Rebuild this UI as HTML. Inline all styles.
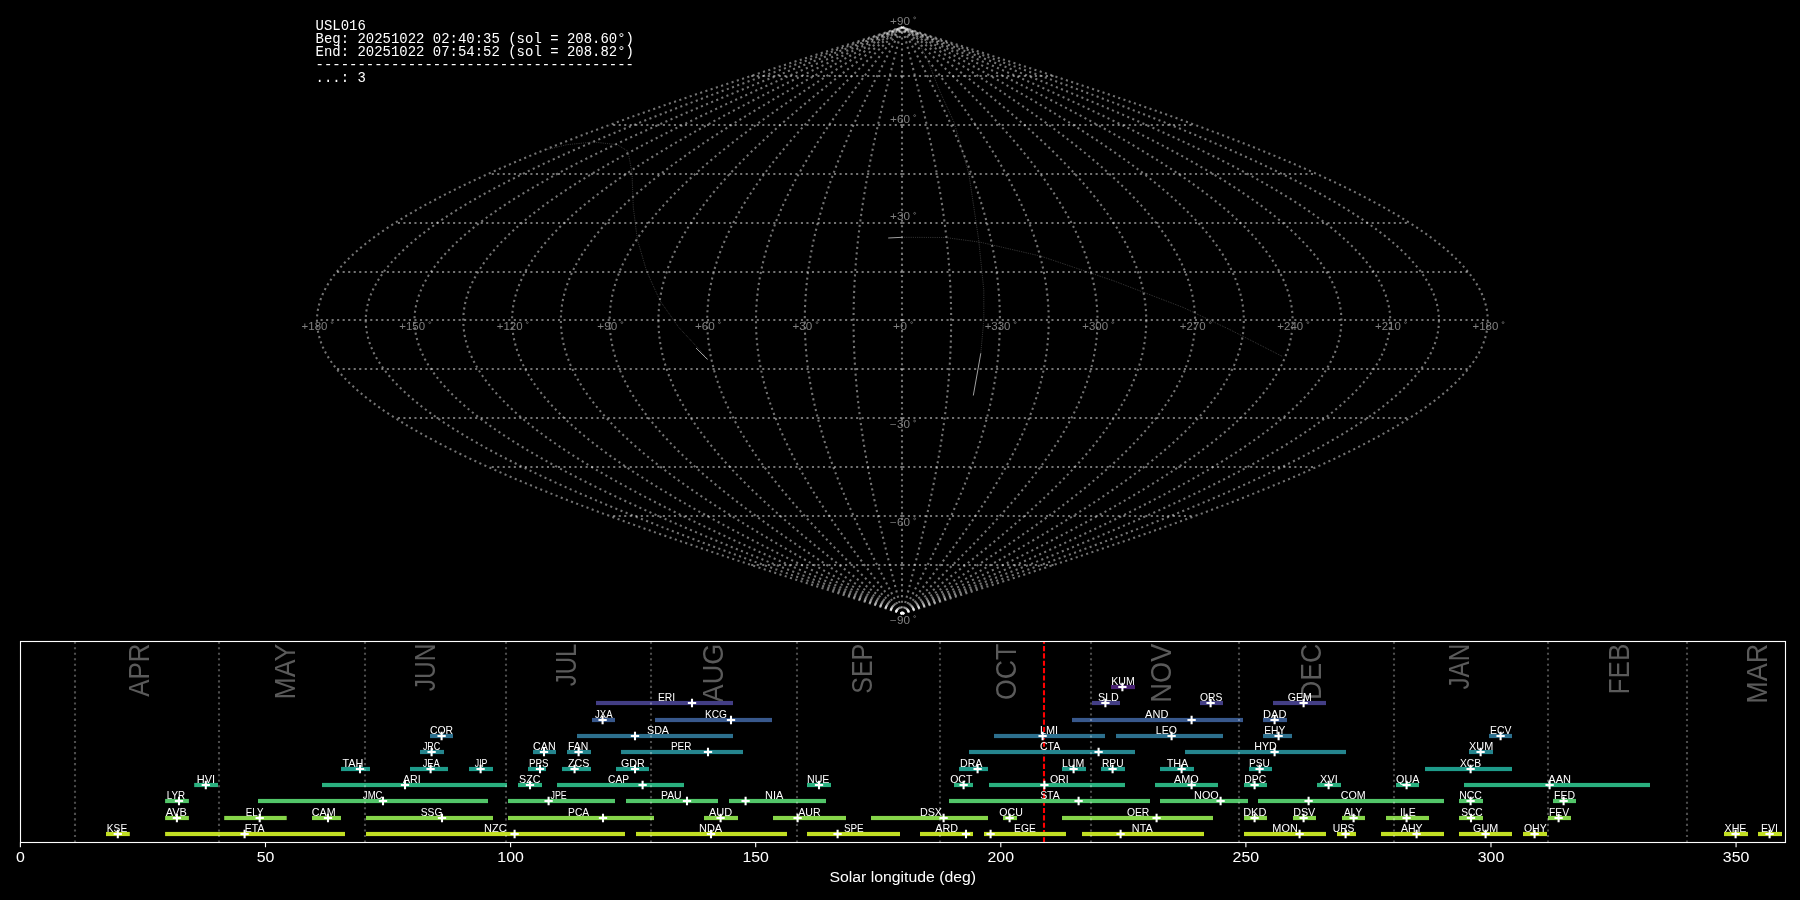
<!DOCTYPE html><html><head><meta charset="utf-8"><title>plot</title><style>html,body{margin:0;padding:0;background:#000;width:1800px;height:900px;overflow:hidden}svg{display:block;will-change:transform}</style></head><body>
<svg width="1800" height="900" viewBox="0 0 1800 900">
<g fill="none" stroke="#fff" stroke-opacity="0.45" stroke-width="2.0833" stroke-dasharray="2.083 3.438"><path d="M902.35 613.76 883.77 607.83 865.22 601.91 846.7 595.98 828.24 590.06 809.85 584.13 791.55 578.21 773.37 572.28 755.32 566.36 737.41 560.43 719.67 554.51 702.11 548.58 684.76 542.65 667.63 536.73 650.73 530.8 634.08 524.88 617.71 518.95 601.62 513.03 585.83 507.1 570.36 501.18 555.23 495.25 540.45 489.33 526.03 483.4 511.99 477.47 498.34 471.55 485.1 465.62 472.28 459.7 459.9 453.77 447.96 447.85 436.47 441.92 425.46 436 414.92 430.07 404.88 424.15 395.34 418.22 386.3 412.29 377.79 406.37 369.81 400.44 362.36 394.52 355.45 388.59 349.1 382.67 343.3 376.74 338.07 370.82 333.4 364.89 329.31 358.97 325.79 353.04 322.86 347.11 320.51 341.19 318.74 335.26 317.56 329.34 316.97 323.41 316.97 317.49 317.56 311.56 318.74 305.64 320.51 299.71 322.86 293.79 325.79 287.86 329.31 281.93 333.4 276.01 338.07 270.08 343.3 264.16 349.1 258.23 355.45 252.31 362.36 246.38 369.81 240.46 377.79 234.53 386.3 228.61 395.34 222.68 404.88 216.75 414.92 210.83 425.46 204.9 436.47 198.98 447.96 193.05 459.9 187.13 472.28 181.2 485.1 175.28 498.34 169.35 511.99 163.43 526.03 157.5 540.45 151.57 555.23 145.65 570.36 139.72 585.83 133.8 601.62 127.87 617.71 121.95 634.08 116.02 650.73 110.1 667.63 104.17 684.76 98.25 702.11 92.32 719.67 86.39 737.41 80.47 755.32 74.54 773.37 68.62 791.55 62.69 809.85 56.77 828.24 50.84 846.7 44.92 865.22 38.99 883.77 33.07 902.35 27.14"/><path d="M902.35 613.76 885.32 607.83 868.31 601.91 851.34 595.98 834.41 590.06 817.56 584.13 800.79 578.21 784.12 572.28 767.57 566.36 751.15 560.43 734.89 554.51 718.8 548.58 702.89 542.65 687.19 536.73 671.7 530.8 656.44 524.88 641.43 518.95 626.68 513.03 612.21 507.1 598.03 501.18 584.16 495.25 570.61 489.33 557.39 483.4 544.52 477.47 532.01 471.55 519.87 465.62 508.12 459.7 496.77 453.77 485.82 447.85 475.29 441.92 465.2 436 455.54 430.07 446.33 424.15 437.59 418.22 429.31 412.29 421.5 406.37 414.18 400.44 407.36 394.52 401.03 388.59 395.2 382.67 389.89 376.74 385.09 370.82 380.82 364.89 377.06 358.97 373.84 353.04 371.15 347.11 368.99 341.19 367.38 335.26 366.3 329.34 365.76 323.41 365.76 317.49 366.3 311.56 367.38 305.64 368.99 299.71 371.15 293.79 373.84 287.86 377.06 281.93 380.82 276.01 385.09 270.08 389.89 264.16 395.2 258.23 401.03 252.31 407.36 246.38 414.18 240.46 421.5 234.53 429.31 228.61 437.59 222.68 446.33 216.75 455.54 210.83 465.2 204.9 475.29 198.98 485.82 193.05 496.77 187.13 508.12 181.2 519.87 175.28 532.01 169.35 544.52 163.43 557.39 157.5 570.61 151.57 584.16 145.65 598.03 139.72 612.21 133.8 626.68 127.87 641.43 121.95 656.44 116.02 671.7 110.1 687.19 104.17 702.89 98.25 718.8 92.32 734.89 86.39 751.15 80.47 767.57 74.54 784.12 68.62 800.79 62.69 817.56 56.77 834.41 50.84 851.34 44.92 868.31 38.99 885.32 33.07 902.35 27.14"/><path d="M902.35 613.76 886.87 607.83 871.41 601.91 855.97 595.98 840.59 590.06 825.27 584.13 810.02 578.21 794.87 572.28 779.82 566.36 764.9 560.43 750.12 554.51 735.49 548.58 721.03 542.65 706.75 536.73 692.66 530.8 678.79 524.88 665.15 518.95 651.74 513.03 638.58 507.1 625.7 501.18 613.09 495.25 600.77 489.33 588.75 483.4 577.05 477.47 565.68 471.55 554.64 465.62 543.96 459.7 533.64 453.77 523.69 447.85 514.12 441.92 504.94 436 496.16 430.07 487.79 424.15 479.84 418.22 472.31 412.29 465.22 406.37 458.56 400.44 452.36 394.52 446.6 388.59 441.31 382.67 436.48 376.74 432.12 370.82 428.23 364.89 424.82 358.97 421.89 353.04 419.44 347.11 417.48 341.19 416.01 335.26 415.03 329.34 414.54 323.41 414.54 317.49 415.03 311.56 416.01 305.64 417.48 299.71 419.44 293.79 421.89 287.86 424.82 281.93 428.23 276.01 432.12 270.08 436.48 264.16 441.31 258.23 446.6 252.31 452.36 246.38 458.56 240.46 465.22 234.53 472.31 228.61 479.84 222.68 487.79 216.75 496.16 210.83 504.94 204.9 514.12 198.98 523.69 193.05 533.64 187.13 543.96 181.2 554.64 175.28 565.68 169.35 577.05 163.43 588.75 157.5 600.77 151.57 613.09 145.65 625.7 139.72 638.58 133.8 651.74 127.87 665.15 121.95 678.79 116.02 692.66 110.1 706.75 104.17 721.03 98.25 735.49 92.32 750.12 86.39 764.9 80.47 779.82 74.54 794.87 68.62 810.02 62.69 825.27 56.77 840.59 50.84 855.97 44.92 871.41 38.99 886.87 33.07 902.35 27.14"/><path d="M902.35 613.76 888.42 607.83 874.5 601.91 860.61 595.98 846.76 590.06 832.97 584.13 819.25 578.21 805.61 572.28 792.07 566.36 778.64 560.43 765.34 554.51 752.17 548.58 739.16 542.65 726.31 536.73 713.63 530.8 701.15 524.88 688.87 518.95 676.8 513.03 664.96 507.1 653.36 501.18 642.01 495.25 630.92 489.33 620.11 483.4 609.58 477.47 599.34 471.55 589.41 465.62 579.8 459.7 570.51 453.77 561.55 447.85 552.94 441.92 544.68 436 536.78 430.07 529.25 424.15 522.09 418.22 515.31 412.29 508.93 406.37 502.94 400.44 497.36 394.52 492.18 388.59 487.41 382.67 483.06 376.74 479.14 370.82 475.64 364.89 472.57 358.97 469.93 353.04 467.73 347.11 465.97 341.19 464.64 335.26 463.76 329.34 463.32 323.41 463.32 317.49 463.76 311.56 464.64 305.64 465.97 299.71 467.73 293.79 469.93 287.86 472.57 281.93 475.64 276.01 479.14 270.08 483.06 264.16 487.41 258.23 492.18 252.31 497.36 246.38 502.94 240.46 508.93 234.53 515.31 228.61 522.09 222.68 529.25 216.75 536.78 210.83 544.68 204.9 552.94 198.98 561.55 193.05 570.51 187.13 579.8 181.2 589.41 175.28 599.34 169.35 609.58 163.43 620.11 157.5 630.92 151.57 642.01 145.65 653.36 139.72 664.96 133.8 676.8 127.87 688.87 121.95 701.15 116.02 713.63 110.1 726.31 104.17 739.16 98.25 752.17 92.32 765.34 86.39 778.64 80.47 792.07 74.54 805.61 68.62 819.25 62.69 832.97 56.77 846.76 50.84 860.61 44.92 874.5 38.99 888.42 33.07 902.35 27.14"/><path d="M902.35 613.76 889.97 607.83 877.6 601.91 865.25 595.98 852.94 590.06 840.68 584.13 828.49 578.21 816.36 572.28 804.33 566.36 792.39 560.43 780.56 554.51 768.86 548.58 757.29 542.65 745.87 536.73 734.6 530.8 723.5 524.88 712.59 518.95 701.86 513.03 691.34 507.1 681.03 501.18 670.94 495.25 661.08 489.33 651.47 483.4 642.11 477.47 633.01 471.55 624.19 465.62 615.64 459.7 607.38 453.77 599.42 447.85 591.76 441.92 584.42 436 577.4 430.07 570.7 424.15 564.34 418.22 558.32 412.29 552.64 406.37 547.32 400.44 542.36 394.52 537.75 388.59 533.52 382.67 529.65 376.74 526.16 370.82 523.05 364.89 520.32 358.97 517.98 353.04 516.02 347.11 514.45 341.19 513.28 335.26 512.49 329.34 512.1 323.41 512.1 317.49 512.49 311.56 513.28 305.64 514.45 299.71 516.02 293.79 517.98 287.86 520.32 281.93 523.05 276.01 526.16 270.08 529.65 264.16 533.52 258.23 537.75 252.31 542.36 246.38 547.32 240.46 552.64 234.53 558.32 228.61 564.34 222.68 570.7 216.75 577.4 210.83 584.42 204.9 591.76 198.98 599.42 193.05 607.38 187.13 615.64 181.2 624.19 175.28 633.01 169.35 642.11 163.43 651.47 157.5 661.08 151.57 670.94 145.65 681.03 139.72 691.34 133.8 701.86 127.87 712.59 121.95 723.5 116.02 734.6 110.1 745.87 104.17 757.29 98.25 768.86 92.32 780.56 86.39 792.39 80.47 804.33 74.54 816.36 68.62 828.49 62.69 840.68 56.77 852.94 50.84 865.25 44.92 877.6 38.99 889.97 33.07 902.35 27.14"/><path d="M902.35 613.76 891.51 607.83 880.69 601.91 869.89 595.98 859.12 590.06 848.39 584.13 837.72 578.21 827.11 572.28 816.58 566.36 806.13 560.43 795.79 554.51 785.55 548.58 775.42 542.65 765.43 536.73 755.57 530.8 745.86 524.88 736.31 518.95 726.92 513.03 717.71 507.1 708.69 501.18 699.86 495.25 691.24 489.33 682.83 483.4 674.64 477.47 666.68 471.55 658.96 465.62 651.48 459.7 644.25 453.77 637.29 447.85 630.59 441.92 624.16 436 618.02 430.07 612.16 424.15 606.59 418.22 601.32 412.29 596.36 406.37 591.7 400.44 587.35 394.52 583.33 388.59 579.62 382.67 576.24 376.74 573.19 370.82 570.46 364.89 568.08 358.97 566.03 353.04 564.31 347.11 562.94 341.19 561.91 335.26 561.22 329.34 560.88 323.41 560.88 317.49 561.22 311.56 561.91 305.64 562.94 299.71 564.31 293.79 566.03 287.86 568.08 281.93 570.46 276.01 573.19 270.08 576.24 264.16 579.62 258.23 583.33 252.31 587.35 246.38 591.7 240.46 596.36 234.53 601.32 228.61 606.59 222.68 612.16 216.75 618.02 210.83 624.16 204.9 630.59 198.98 637.29 193.05 644.25 187.13 651.48 181.2 658.96 175.28 666.68 169.35 674.64 163.43 682.83 157.5 691.24 151.57 699.86 145.65 708.69 139.72 717.71 133.8 726.92 127.87 736.31 121.95 745.86 116.02 755.57 110.1 765.43 104.17 775.42 98.25 785.55 92.32 795.79 86.39 806.13 80.47 816.58 74.54 827.11 68.62 837.72 62.69 848.39 56.77 859.12 50.84 869.89 44.92 880.69 38.99 891.51 33.07 902.35 27.14"/><path d="M902.35 613.76 893.06 607.83 883.78 601.91 874.52 595.98 865.29 590.06 856.1 584.13 846.95 578.21 837.86 572.28 828.83 566.36 819.88 560.43 811.01 554.51 802.23 548.58 793.56 542.65 784.99 536.73 776.54 530.8 768.22 524.88 760.03 518.95 751.98 513.03 744.09 507.1 736.36 501.18 728.79 495.25 721.4 489.33 714.19 483.4 707.17 477.47 700.35 471.55 693.73 465.62 687.32 459.7 681.12 453.77 675.15 447.85 669.41 441.92 663.9 436 658.64 430.07 653.61 424.15 648.84 418.22 644.33 412.29 640.07 406.37 636.08 400.44 632.35 394.52 628.9 388.59 625.72 382.67 622.83 376.74 620.21 370.82 617.88 364.89 615.83 358.97 614.07 353.04 612.6 347.11 611.43 341.19 610.55 335.26 609.96 329.34 609.66 323.41 609.66 317.49 609.96 311.56 610.55 305.64 611.43 299.71 612.6 293.79 614.07 287.86 615.83 281.93 617.88 276.01 620.21 270.08 622.83 264.16 625.72 258.23 628.9 252.31 632.35 246.38 636.08 240.46 640.07 234.53 644.33 228.61 648.84 222.68 653.61 216.75 658.64 210.83 663.9 204.9 669.41 198.98 675.15 193.05 681.12 187.13 687.32 181.2 693.73 175.28 700.35 169.35 707.17 163.43 714.19 157.5 721.4 151.57 728.79 145.65 736.36 139.72 744.09 133.8 751.98 127.87 760.03 121.95 768.22 116.02 776.54 110.1 784.99 104.17 793.56 98.25 802.23 92.32 811.01 86.39 819.88 80.47 828.83 74.54 837.86 68.62 846.95 62.69 856.1 56.77 865.29 50.84 874.52 44.92 883.78 38.99 893.06 33.07 902.35 27.14"/><path d="M902.35 613.76 894.61 607.83 886.88 601.91 879.16 595.98 871.47 590.06 863.81 584.13 856.18 578.21 848.61 572.28 841.09 566.36 833.62 560.43 826.23 554.51 818.92 548.58 811.69 542.65 804.55 536.73 797.51 530.8 790.57 524.88 783.75 518.95 777.04 513.03 770.47 507.1 764.02 501.18 757.72 495.25 751.56 489.33 745.55 483.4 739.7 477.47 734.01 471.55 728.5 465.62 723.16 459.7 717.99 453.77 713.02 447.85 708.23 441.92 703.64 436 699.25 430.07 695.07 424.15 691.09 418.22 687.33 412.29 683.78 406.37 680.46 400.44 677.35 394.52 674.48 388.59 671.83 382.67 669.41 376.74 667.23 370.82 665.29 364.89 663.58 358.97 662.12 353.04 660.9 347.11 659.92 341.19 659.18 335.26 658.69 329.34 658.44 323.41 658.44 317.49 658.69 311.56 659.18 305.64 659.92 299.71 660.9 293.79 662.12 287.86 663.58 281.93 665.29 276.01 667.23 270.08 669.41 264.16 671.83 258.23 674.48 252.31 677.35 246.38 680.46 240.46 683.78 234.53 687.33 228.61 691.09 222.68 695.07 216.75 699.25 210.83 703.64 204.9 708.23 198.98 713.02 193.05 717.99 187.13 723.16 181.2 728.5 175.28 734.01 169.35 739.7 163.43 745.55 157.5 751.56 151.57 757.72 145.65 764.02 139.72 770.47 133.8 777.04 127.87 783.75 121.95 790.57 116.02 797.51 110.1 804.55 104.17 811.69 98.25 818.92 92.32 826.23 86.39 833.62 80.47 841.09 74.54 848.61 68.62 856.18 62.69 863.81 56.77 871.47 50.84 879.16 44.92 886.88 38.99 894.61 33.07 902.35 27.14"/><path d="M902.35 613.76 896.16 607.83 889.97 601.91 883.8 595.98 877.65 590.06 871.52 584.13 865.42 578.21 859.36 572.28 853.34 566.36 847.37 560.43 841.46 554.51 835.6 548.58 829.82 542.65 824.11 536.73 818.48 530.8 812.93 524.88 807.47 518.95 802.11 513.03 796.84 507.1 791.69 501.18 786.64 495.25 781.72 489.33 776.91 483.4 772.23 477.47 767.68 471.55 763.27 465.62 758.99 459.7 754.87 453.77 750.89 447.85 747.06 441.92 743.39 436 739.87 430.07 736.53 424.15 733.35 418.22 730.33 412.29 727.5 406.37 724.84 400.44 722.35 394.52 720.05 388.59 717.93 382.67 716 376.74 714.26 370.82 712.7 364.89 711.34 358.97 710.16 353.04 709.19 347.11 708.4 341.19 707.81 335.26 707.42 329.34 707.22 323.41 707.22 317.49 707.42 311.56 707.81 305.64 708.4 299.71 709.19 293.79 710.16 287.86 711.34 281.93 712.7 276.01 714.26 270.08 716 264.16 717.93 258.23 720.05 252.31 722.35 246.38 724.84 240.46 727.5 234.53 730.33 228.61 733.35 222.68 736.53 216.75 739.87 210.83 743.39 204.9 747.06 198.98 750.89 193.05 754.87 187.13 758.99 181.2 763.27 175.28 767.68 169.35 772.23 163.43 776.91 157.5 781.72 151.57 786.64 145.65 791.69 139.72 796.84 133.8 802.11 127.87 807.47 121.95 812.93 116.02 818.48 110.1 824.11 104.17 829.82 98.25 835.6 92.32 841.46 86.39 847.37 80.47 853.34 74.54 859.36 68.62 865.42 62.69 871.52 56.77 877.65 50.84 883.8 44.92 889.97 38.99 896.16 33.07 902.35 27.14"/><path d="M902.35 613.76 897.71 607.83 893.07 601.91 888.44 595.98 883.82 590.06 879.22 584.13 874.65 578.21 870.1 572.28 865.59 566.36 861.11 560.43 856.68 554.51 852.29 548.58 847.95 542.65 843.67 536.73 839.44 530.8 835.28 524.88 831.19 518.95 827.17 513.03 823.22 507.1 819.35 501.18 815.57 495.25 811.87 489.33 808.27 483.4 804.76 477.47 801.35 471.55 798.04 465.62 794.83 459.7 791.74 453.77 788.75 447.85 785.88 441.92 783.13 436 780.49 430.07 777.98 424.15 775.6 418.22 773.34 412.29 771.21 406.37 769.21 400.44 767.35 394.52 765.63 388.59 764.04 382.67 762.59 376.74 761.28 370.82 760.11 364.89 759.09 358.97 758.21 353.04 757.48 347.11 756.89 341.19 756.45 335.26 756.15 329.34 756.01 323.41 756.01 317.49 756.15 311.56 756.45 305.64 756.89 299.71 757.48 293.79 758.21 287.86 759.09 281.93 760.11 276.01 761.28 270.08 762.59 264.16 764.04 258.23 765.63 252.31 767.35 246.38 769.21 240.46 771.21 234.53 773.34 228.61 775.6 222.68 777.98 216.75 780.49 210.83 783.13 204.9 785.88 198.98 788.75 193.05 791.74 187.13 794.83 181.2 798.04 175.28 801.35 169.35 804.76 163.43 808.27 157.5 811.87 151.57 815.57 145.65 819.35 139.72 823.22 133.8 827.17 127.87 831.19 121.95 835.28 116.02 839.44 110.1 843.67 104.17 847.95 98.25 852.29 92.32 856.68 86.39 861.11 80.47 865.59 74.54 870.1 68.62 874.65 62.69 879.22 56.77 883.82 50.84 888.44 44.92 893.07 38.99 897.71 33.07 902.35 27.14"/><path d="M902.35 613.76 899.25 607.83 896.16 601.91 893.07 595.98 890 590.06 886.93 584.13 883.88 578.21 880.85 572.28 877.84 566.36 874.86 560.43 871.9 554.51 868.98 548.58 866.09 542.65 863.23 536.73 860.41 530.8 857.64 524.88 854.91 518.95 852.23 513.03 849.6 507.1 847.02 501.18 844.5 495.25 842.03 489.33 839.63 483.4 837.29 477.47 835.02 471.55 832.81 465.62 830.67 459.7 828.61 453.77 826.62 447.85 824.7 441.92 822.87 436 821.11 430.07 819.44 424.15 817.85 418.22 816.34 412.29 814.92 406.37 813.59 400.44 812.35 394.52 811.2 388.59 810.14 382.67 809.18 376.74 808.3 370.82 807.53 364.89 806.84 358.97 806.26 353.04 805.77 347.11 805.38 341.19 805.08 335.26 804.89 329.34 804.79 323.41 804.79 317.49 804.89 311.56 805.08 305.64 805.38 299.71 805.77 293.79 806.26 287.86 806.84 281.93 807.53 276.01 808.3 270.08 809.18 264.16 810.14 258.23 811.2 252.31 812.35 246.38 813.59 240.46 814.92 234.53 816.34 228.61 817.85 222.68 819.44 216.75 821.11 210.83 822.87 204.9 824.7 198.98 826.62 193.05 828.61 187.13 830.67 181.2 832.81 175.28 835.02 169.35 837.29 163.43 839.63 157.5 842.03 151.57 844.5 145.65 847.02 139.72 849.6 133.8 852.23 127.87 854.91 121.95 857.64 116.02 860.41 110.1 863.23 104.17 866.09 98.25 868.98 92.32 871.9 86.39 874.86 80.47 877.84 74.54 880.85 68.62 883.88 62.69 886.93 56.77 890 50.84 893.07 44.92 896.16 38.99 899.25 33.07 902.35 27.14"/><path d="M902.35 613.76 900.8 607.83 899.26 601.91 897.71 595.98 896.17 590.06 894.64 584.13 893.12 578.21 891.6 572.28 890.1 566.36 888.6 560.43 887.13 554.51 885.66 548.58 884.22 542.65 882.79 536.73 881.38 530.8 879.99 524.88 878.63 518.95 877.29 513.03 875.97 507.1 874.68 501.18 873.42 495.25 872.19 489.33 870.99 483.4 869.82 477.47 868.68 471.55 867.58 465.62 866.51 459.7 865.48 453.77 864.48 447.85 863.53 441.92 862.61 436 861.73 430.07 860.89 424.15 860.1 418.22 859.35 412.29 858.64 406.37 857.97 400.44 857.35 394.52 856.78 388.59 856.25 382.67 855.76 376.74 855.33 370.82 854.94 364.89 854.6 358.97 854.3 353.04 854.06 347.11 853.86 341.19 853.72 335.26 853.62 329.34 853.57 323.41 853.57 317.49 853.62 311.56 853.72 305.64 853.86 299.71 854.06 293.79 854.3 287.86 854.6 281.93 854.94 276.01 855.33 270.08 855.76 264.16 856.25 258.23 856.78 252.31 857.35 246.38 857.97 240.46 858.64 234.53 859.35 228.61 860.1 222.68 860.89 216.75 861.73 210.83 862.61 204.9 863.53 198.98 864.48 193.05 865.48 187.13 866.51 181.2 867.58 175.28 868.68 169.35 869.82 163.43 870.99 157.5 872.19 151.57 873.42 145.65 874.68 139.72 875.97 133.8 877.29 127.87 878.63 121.95 879.99 116.02 881.38 110.1 882.79 104.17 884.22 98.25 885.66 92.32 887.13 86.39 888.6 80.47 890.1 74.54 891.6 68.62 893.12 62.69 894.64 56.77 896.17 50.84 897.71 44.92 899.26 38.99 900.8 33.07 902.35 27.14"/><path d="M902 613.76 902 607.83 902 601.91 902 595.98 902 590.06 902 584.13 902 578.21 902 572.28 902 566.36 902 560.43 902 554.51 902 548.58 902 542.65 902 536.73 902 530.8 902 524.88 902 518.95 902 513.03 902 507.1 902 501.18 902 495.25 902 489.33 902 483.4 902 477.47 902 471.55 902 465.62 902 459.7 902 453.77 902 447.85 902 441.92 902 436 902 430.07 902 424.15 902 418.22 902 412.29 902 406.37 902 400.44 902 394.52 902 388.59 902 382.67 902 376.74 902 370.82 902 364.89 902 358.97 902 353.04 902 347.11 902 341.19 902 335.26 902 329.34 902 323.41 902 317.49 902 311.56 902 305.64 902 299.71 902 293.79 902 287.86 902 281.93 902 276.01 902 270.08 902 264.16 902 258.23 902 252.31 902 246.38 902 240.46 902 234.53 902 228.61 902 222.68 902 216.75 902 210.83 902 204.9 902 198.98 902 193.05 902 187.13 902 181.2 902 175.28 902 169.35 902 163.43 902 157.5 902 151.57 902 145.65 902 139.72 902 133.8 902 127.87 902 121.95 902 116.02 902 110.1 902 104.17 902 98.25 902 92.32 902 86.39 902 80.47 902 74.54 902 68.62 902 62.69 902 56.77 902 50.84 902 44.92 902 38.99 902 33.07 902 27.14"/><path d="M902.35 613.76 903.9 607.83 905.44 601.91 906.99 595.98 908.53 590.06 910.06 584.13 911.58 578.21 913.1 572.28 914.6 566.36 916.1 560.43 917.57 554.51 919.04 548.58 920.48 542.65 921.91 536.73 923.32 530.8 924.71 524.88 926.07 518.95 927.41 513.03 928.73 507.1 930.02 501.18 931.28 495.25 932.51 489.33 933.71 483.4 934.88 477.47 936.02 471.55 937.12 465.62 938.19 459.7 939.22 453.77 940.22 447.85 941.17 441.92 942.09 436 942.97 430.07 943.81 424.15 944.6 418.22 945.35 412.29 946.06 406.37 946.73 400.44 947.35 394.52 947.92 388.59 948.45 382.67 948.94 376.74 949.37 370.82 949.76 364.89 950.1 358.97 950.4 353.04 950.64 347.11 950.84 341.19 950.98 335.26 951.08 329.34 951.13 323.41 951.13 317.49 951.08 311.56 950.98 305.64 950.84 299.71 950.64 293.79 950.4 287.86 950.1 281.93 949.76 276.01 949.37 270.08 948.94 264.16 948.45 258.23 947.92 252.31 947.35 246.38 946.73 240.46 946.06 234.53 945.35 228.61 944.6 222.68 943.81 216.75 942.97 210.83 942.09 204.9 941.17 198.98 940.22 193.05 939.22 187.13 938.19 181.2 937.12 175.28 936.02 169.35 934.88 163.43 933.71 157.5 932.51 151.57 931.28 145.65 930.02 139.72 928.73 133.8 927.41 127.87 926.07 121.95 924.71 116.02 923.32 110.1 921.91 104.17 920.48 98.25 919.04 92.32 917.57 86.39 916.1 80.47 914.6 74.54 913.1 68.62 911.58 62.69 910.06 56.77 908.53 50.84 906.99 44.92 905.44 38.99 903.9 33.07 902.35 27.14"/><path d="M902.35 613.76 905.45 607.83 908.54 601.91 911.63 595.98 914.7 590.06 917.77 584.13 920.82 578.21 923.85 572.28 926.86 566.36 929.84 560.43 932.8 554.51 935.72 548.58 938.61 542.65 941.47 536.73 944.29 530.8 947.06 524.88 949.79 518.95 952.47 513.03 955.1 507.1 957.68 501.18 960.2 495.25 962.67 489.33 965.07 483.4 967.41 477.47 969.68 471.55 971.89 465.62 974.03 459.7 976.09 453.77 978.08 447.85 980 441.92 981.83 436 983.59 430.07 985.26 424.15 986.85 418.22 988.36 412.29 989.78 406.37 991.11 400.44 992.35 394.52 993.5 388.59 994.56 382.67 995.52 376.74 996.4 370.82 997.17 364.89 997.86 358.97 998.44 353.04 998.93 347.11 999.32 341.19 999.62 335.26 999.81 329.34 999.91 323.41 999.91 317.49 999.81 311.56 999.62 305.64 999.32 299.71 998.93 293.79 998.44 287.86 997.86 281.93 997.17 276.01 996.4 270.08 995.52 264.16 994.56 258.23 993.5 252.31 992.35 246.38 991.11 240.46 989.78 234.53 988.36 228.61 986.85 222.68 985.26 216.75 983.59 210.83 981.83 204.9 980 198.98 978.08 193.05 976.09 187.13 974.03 181.2 971.89 175.28 969.68 169.35 967.41 163.43 965.07 157.5 962.67 151.57 960.2 145.65 957.68 139.72 955.1 133.8 952.47 127.87 949.79 121.95 947.06 116.02 944.29 110.1 941.47 104.17 938.61 98.25 935.72 92.32 932.8 86.39 929.84 80.47 926.86 74.54 923.85 68.62 920.82 62.69 917.77 56.77 914.7 50.84 911.63 44.92 908.54 38.99 905.45 33.07 902.35 27.14"/><path d="M902.35 613.76 906.99 607.83 911.63 601.91 916.26 595.98 920.88 590.06 925.48 584.13 930.05 578.21 934.6 572.28 939.11 566.36 943.59 560.43 948.02 554.51 952.41 548.58 956.75 542.65 961.03 536.73 965.26 530.8 969.42 524.88 973.51 518.95 977.53 513.03 981.48 507.1 985.35 501.18 989.13 495.25 992.83 489.33 996.43 483.4 999.94 477.47 1003.35 471.55 1006.66 465.62 1009.87 459.7 1012.96 453.77 1015.95 447.85 1018.82 441.92 1021.57 436 1024.21 430.07 1026.72 424.15 1029.1 418.22 1031.36 412.29 1033.49 406.37 1035.49 400.44 1037.35 394.52 1039.07 388.59 1040.66 382.67 1042.11 376.74 1043.42 370.82 1044.59 364.89 1045.61 358.97 1046.49 353.04 1047.22 347.11 1047.81 341.19 1048.25 335.26 1048.55 329.34 1048.69 323.41 1048.69 317.49 1048.55 311.56 1048.25 305.64 1047.81 299.71 1047.22 293.79 1046.49 287.86 1045.61 281.93 1044.59 276.01 1043.42 270.08 1042.11 264.16 1040.66 258.23 1039.07 252.31 1037.35 246.38 1035.49 240.46 1033.49 234.53 1031.36 228.61 1029.1 222.68 1026.72 216.75 1024.21 210.83 1021.57 204.9 1018.82 198.98 1015.95 193.05 1012.96 187.13 1009.87 181.2 1006.66 175.28 1003.35 169.35 999.94 163.43 996.43 157.5 992.83 151.57 989.13 145.65 985.35 139.72 981.48 133.8 977.53 127.87 973.51 121.95 969.42 116.02 965.26 110.1 961.03 104.17 956.75 98.25 952.41 92.32 948.02 86.39 943.59 80.47 939.11 74.54 934.6 68.62 930.05 62.69 925.48 56.77 920.88 50.84 916.26 44.92 911.63 38.99 906.99 33.07 902.35 27.14"/><path d="M902.35 613.76 908.54 607.83 914.73 601.91 920.9 595.98 927.05 590.06 933.18 584.13 939.28 578.21 945.34 572.28 951.36 566.36 957.33 560.43 963.24 554.51 969.1 548.58 974.88 542.65 980.59 536.73 986.22 530.8 991.77 524.88 997.23 518.95 1002.59 513.03 1007.86 507.1 1013.01 501.18 1018.06 495.25 1022.98 489.33 1027.79 483.4 1032.47 477.47 1037.02 471.55 1041.43 465.62 1045.71 459.7 1049.83 453.77 1053.81 447.85 1057.64 441.92 1061.31 436 1064.83 430.07 1068.17 424.15 1071.35 418.22 1074.37 412.29 1077.2 406.37 1079.86 400.44 1082.35 394.52 1084.65 388.59 1086.77 382.67 1088.7 376.74 1090.44 370.82 1092 364.89 1093.36 358.97 1094.54 353.04 1095.51 347.11 1096.3 341.19 1096.89 335.26 1097.28 329.34 1097.48 323.41 1097.48 317.49 1097.28 311.56 1096.89 305.64 1096.3 299.71 1095.51 293.79 1094.54 287.86 1093.36 281.93 1092 276.01 1090.44 270.08 1088.7 264.16 1086.77 258.23 1084.65 252.31 1082.35 246.38 1079.86 240.46 1077.2 234.53 1074.37 228.61 1071.35 222.68 1068.17 216.75 1064.83 210.83 1061.31 204.9 1057.64 198.98 1053.81 193.05 1049.83 187.13 1045.71 181.2 1041.43 175.28 1037.02 169.35 1032.47 163.43 1027.79 157.5 1022.98 151.57 1018.06 145.65 1013.01 139.72 1007.86 133.8 1002.59 127.87 997.23 121.95 991.77 116.02 986.22 110.1 980.59 104.17 974.88 98.25 969.1 92.32 963.24 86.39 957.33 80.47 951.36 74.54 945.34 68.62 939.28 62.69 933.18 56.77 927.05 50.84 920.9 44.92 914.73 38.99 908.54 33.07 902.35 27.14"/><path d="M902.35 613.76 910.09 607.83 917.82 601.91 925.54 595.98 933.23 590.06 940.89 584.13 948.52 578.21 956.09 572.28 963.61 566.36 971.08 560.43 978.47 554.51 985.78 548.58 993.01 542.65 1000.15 536.73 1007.19 530.8 1014.13 524.88 1020.95 518.95 1027.66 513.03 1034.23 507.1 1040.68 501.18 1046.98 495.25 1053.14 489.33 1059.15 483.4 1065 477.47 1070.69 471.55 1076.2 465.62 1081.54 459.7 1086.71 453.77 1091.68 447.85 1096.47 441.92 1101.06 436 1105.45 430.07 1109.63 424.15 1113.61 418.22 1117.37 412.29 1120.92 406.37 1124.24 400.44 1127.35 394.52 1130.22 388.59 1132.87 382.67 1135.29 376.74 1137.47 370.82 1139.41 364.89 1141.12 358.97 1142.58 353.04 1143.8 347.11 1144.78 341.19 1145.52 335.26 1146.01 329.34 1146.26 323.41 1146.26 317.49 1146.01 311.56 1145.52 305.64 1144.78 299.71 1143.8 293.79 1142.58 287.86 1141.12 281.93 1139.41 276.01 1137.47 270.08 1135.29 264.16 1132.87 258.23 1130.22 252.31 1127.35 246.38 1124.24 240.46 1120.92 234.53 1117.37 228.61 1113.61 222.68 1109.63 216.75 1105.45 210.83 1101.06 204.9 1096.47 198.98 1091.68 193.05 1086.71 187.13 1081.54 181.2 1076.2 175.28 1070.69 169.35 1065 163.43 1059.15 157.5 1053.14 151.57 1046.98 145.65 1040.68 139.72 1034.23 133.8 1027.66 127.87 1020.95 121.95 1014.13 116.02 1007.19 110.1 1000.15 104.17 993.01 98.25 985.78 92.32 978.47 86.39 971.08 80.47 963.61 74.54 956.09 68.62 948.52 62.69 940.89 56.77 933.23 50.84 925.54 44.92 917.82 38.99 910.09 33.07 902.35 27.14"/><path d="M902.35 613.76 911.64 607.83 920.92 601.91 930.18 595.98 939.41 590.06 948.6 584.13 957.75 578.21 966.84 572.28 975.87 566.36 984.82 560.43 993.69 554.51 1002.47 548.58 1011.14 542.65 1019.71 536.73 1028.16 530.8 1036.48 524.88 1044.67 518.95 1052.72 513.03 1060.61 507.1 1068.34 501.18 1075.91 495.25 1083.3 489.33 1090.51 483.4 1097.53 477.47 1104.35 471.55 1110.97 465.62 1117.38 459.7 1123.58 453.77 1129.55 447.85 1135.29 441.92 1140.8 436 1146.06 430.07 1151.09 424.15 1155.86 418.22 1160.37 412.29 1164.63 406.37 1168.62 400.44 1172.35 394.52 1175.8 388.59 1178.98 382.67 1181.87 376.74 1184.49 370.82 1186.82 364.89 1188.87 358.97 1190.63 353.04 1192.1 347.11 1193.27 341.19 1194.15 335.26 1194.74 329.34 1195.04 323.41 1195.04 317.49 1194.74 311.56 1194.15 305.64 1193.27 299.71 1192.1 293.79 1190.63 287.86 1188.87 281.93 1186.82 276.01 1184.49 270.08 1181.87 264.16 1178.98 258.23 1175.8 252.31 1172.35 246.38 1168.62 240.46 1164.63 234.53 1160.37 228.61 1155.86 222.68 1151.09 216.75 1146.06 210.83 1140.8 204.9 1135.29 198.98 1129.55 193.05 1123.58 187.13 1117.38 181.2 1110.97 175.28 1104.35 169.35 1097.53 163.43 1090.51 157.5 1083.3 151.57 1075.91 145.65 1068.34 139.72 1060.61 133.8 1052.72 127.87 1044.67 121.95 1036.48 116.02 1028.16 110.1 1019.71 104.17 1011.14 98.25 1002.47 92.32 993.69 86.39 984.82 80.47 975.87 74.54 966.84 68.62 957.75 62.69 948.6 56.77 939.41 50.84 930.18 44.92 920.92 38.99 911.64 33.07 902.35 27.14"/><path d="M902.35 613.76 913.19 607.83 924.01 601.91 934.81 595.98 945.58 590.06 956.31 584.13 966.98 578.21 977.59 572.28 988.12 566.36 998.57 560.43 1008.91 554.51 1019.15 548.58 1029.28 542.65 1039.27 536.73 1049.13 530.8 1058.84 524.88 1068.39 518.95 1077.78 513.03 1086.99 507.1 1096.01 501.18 1104.84 495.25 1113.46 489.33 1121.87 483.4 1130.06 477.47 1138.02 471.55 1145.74 465.62 1153.22 459.7 1160.45 453.77 1167.41 447.85 1174.11 441.92 1180.54 436 1186.68 430.07 1192.54 424.15 1198.11 418.22 1203.38 412.29 1208.34 406.37 1213 400.44 1217.35 394.52 1221.37 388.59 1225.08 382.67 1228.46 376.74 1231.51 370.82 1234.24 364.89 1236.62 358.97 1238.67 353.04 1240.39 347.11 1241.76 341.19 1242.79 335.26 1243.48 329.34 1243.82 323.41 1243.82 317.49 1243.48 311.56 1242.79 305.64 1241.76 299.71 1240.39 293.79 1238.67 287.86 1236.62 281.93 1234.24 276.01 1231.51 270.08 1228.46 264.16 1225.08 258.23 1221.37 252.31 1217.35 246.38 1213 240.46 1208.34 234.53 1203.38 228.61 1198.11 222.68 1192.54 216.75 1186.68 210.83 1180.54 204.9 1174.11 198.98 1167.41 193.05 1160.45 187.13 1153.22 181.2 1145.74 175.28 1138.02 169.35 1130.06 163.43 1121.87 157.5 1113.46 151.57 1104.84 145.65 1096.01 139.72 1086.99 133.8 1077.78 127.87 1068.39 121.95 1058.84 116.02 1049.13 110.1 1039.27 104.17 1029.28 98.25 1019.15 92.32 1008.91 86.39 998.57 80.47 988.12 74.54 977.59 68.62 966.98 62.69 956.31 56.77 945.58 50.84 934.81 44.92 924.01 38.99 913.19 33.07 902.35 27.14"/><path d="M902.35 613.76 914.73 607.83 927.1 601.91 939.45 595.98 951.76 590.06 964.02 584.13 976.21 578.21 988.34 572.28 1000.37 566.36 1012.31 560.43 1024.14 554.51 1035.84 548.58 1047.41 542.65 1058.83 536.73 1070.1 530.8 1081.2 524.88 1092.11 518.95 1102.84 513.03 1113.36 507.1 1123.67 501.18 1133.76 495.25 1143.62 489.33 1153.23 483.4 1162.59 477.47 1171.69 471.55 1180.51 465.62 1189.06 459.7 1197.32 453.77 1205.28 447.85 1212.94 441.92 1220.28 436 1227.3 430.07 1234 424.15 1240.36 418.22 1246.38 412.29 1252.06 406.37 1257.38 400.44 1262.34 394.52 1266.95 388.59 1271.18 382.67 1275.05 376.74 1278.54 370.82 1281.65 364.89 1284.38 358.97 1286.72 353.04 1288.68 347.11 1290.25 341.19 1291.42 335.26 1292.21 329.34 1292.6 323.41 1292.6 317.49 1292.21 311.56 1291.42 305.64 1290.25 299.71 1288.68 293.79 1286.72 287.86 1284.38 281.93 1281.65 276.01 1278.54 270.08 1275.05 264.16 1271.18 258.23 1266.95 252.31 1262.34 246.38 1257.38 240.46 1252.06 234.53 1246.38 228.61 1240.36 222.68 1234 216.75 1227.3 210.83 1220.28 204.9 1212.94 198.98 1205.28 193.05 1197.32 187.13 1189.06 181.2 1180.51 175.28 1171.69 169.35 1162.59 163.43 1153.23 157.5 1143.62 151.57 1133.76 145.65 1123.67 139.72 1113.36 133.8 1102.84 127.87 1092.11 121.95 1081.2 116.02 1070.1 110.1 1058.83 104.17 1047.41 98.25 1035.84 92.32 1024.14 86.39 1012.31 80.47 1000.37 74.54 988.34 68.62 976.21 62.69 964.02 56.77 951.76 50.84 939.45 44.92 927.1 38.99 914.73 33.07 902.35 27.14"/><path d="M902.35 613.76 916.28 607.83 930.2 601.91 944.09 595.98 957.94 590.06 971.73 584.13 985.45 578.21 999.09 572.28 1012.63 566.36 1026.06 560.43 1039.36 554.51 1052.53 548.58 1065.54 542.65 1078.39 536.73 1091.07 530.8 1103.55 524.88 1115.83 518.95 1127.9 513.03 1139.74 507.1 1151.34 501.18 1162.69 495.25 1173.78 489.33 1184.59 483.4 1195.12 477.47 1205.36 471.55 1215.29 465.62 1224.9 459.7 1234.19 453.77 1243.15 447.85 1251.76 441.92 1260.02 436 1267.92 430.07 1275.45 424.15 1282.61 418.22 1289.39 412.29 1295.77 406.37 1301.76 400.44 1307.34 394.52 1312.52 388.59 1317.29 382.67 1321.64 376.74 1325.56 370.82 1329.06 364.89 1332.13 358.97 1334.77 353.04 1336.97 347.11 1338.73 341.19 1340.06 335.26 1340.94 329.34 1341.38 323.41 1341.38 317.49 1340.94 311.56 1340.06 305.64 1338.73 299.71 1336.97 293.79 1334.77 287.86 1332.13 281.93 1329.06 276.01 1325.56 270.08 1321.64 264.16 1317.29 258.23 1312.52 252.31 1307.34 246.38 1301.76 240.46 1295.77 234.53 1289.39 228.61 1282.61 222.68 1275.45 216.75 1267.92 210.83 1260.02 204.9 1251.76 198.98 1243.15 193.05 1234.19 187.13 1224.9 181.2 1215.29 175.28 1205.36 169.35 1195.12 163.43 1184.59 157.5 1173.78 151.57 1162.69 145.65 1151.34 139.72 1139.74 133.8 1127.9 127.87 1115.83 121.95 1103.55 116.02 1091.07 110.1 1078.39 104.17 1065.54 98.25 1052.53 92.32 1039.36 86.39 1026.06 80.47 1012.63 74.54 999.09 68.62 985.45 62.69 971.73 56.77 957.94 50.84 944.09 44.92 930.2 38.99 916.28 33.07 902.35 27.14"/><path d="M902.35 613.76 917.83 607.83 933.29 601.91 948.73 595.98 964.11 590.06 979.43 584.13 994.68 578.21 1009.83 572.28 1024.88 566.36 1039.8 560.43 1054.58 554.51 1069.21 548.58 1083.67 542.65 1097.95 536.73 1112.04 530.8 1125.91 524.88 1139.55 518.95 1152.96 513.03 1166.12 507.1 1179 501.18 1191.61 495.25 1203.93 489.33 1215.95 483.4 1227.65 477.47 1239.02 471.55 1250.06 465.62 1260.74 459.7 1271.06 453.77 1281.01 447.85 1290.58 441.92 1299.76 436 1308.54 430.07 1316.91 424.15 1324.86 418.22 1332.39 412.29 1339.48 406.37 1346.14 400.44 1352.34 394.52 1358.1 388.59 1363.39 382.67 1368.22 376.74 1372.58 370.82 1376.47 364.89 1379.88 358.97 1382.81 353.04 1385.26 347.11 1387.22 341.19 1388.69 335.26 1389.67 329.34 1390.16 323.41 1390.16 317.49 1389.67 311.56 1388.69 305.64 1387.22 299.71 1385.26 293.79 1382.81 287.86 1379.88 281.93 1376.47 276.01 1372.58 270.08 1368.22 264.16 1363.39 258.23 1358.1 252.31 1352.34 246.38 1346.14 240.46 1339.48 234.53 1332.39 228.61 1324.86 222.68 1316.91 216.75 1308.54 210.83 1299.76 204.9 1290.58 198.98 1281.01 193.05 1271.06 187.13 1260.74 181.2 1250.06 175.28 1239.02 169.35 1227.65 163.43 1215.95 157.5 1203.93 151.57 1191.61 145.65 1179 139.72 1166.12 133.8 1152.96 127.87 1139.55 121.95 1125.91 116.02 1112.04 110.1 1097.95 104.17 1083.67 98.25 1069.21 92.32 1054.58 86.39 1039.8 80.47 1024.88 74.54 1009.83 68.62 994.68 62.69 979.43 56.77 964.11 50.84 948.73 44.92 933.29 38.99 917.83 33.07 902.35 27.14"/><path d="M902.35 613.76 919.38 607.83 936.39 601.91 953.36 595.98 970.29 590.06 987.14 584.13 1003.91 578.21 1020.58 572.28 1037.13 566.36 1053.55 560.43 1069.81 554.51 1085.9 548.58 1101.81 542.65 1117.51 536.73 1133 530.8 1148.26 524.88 1163.27 518.95 1178.02 513.03 1192.49 507.1 1206.67 501.18 1220.54 495.25 1234.09 489.33 1247.31 483.4 1260.18 477.47 1272.69 471.55 1284.83 465.62 1296.58 459.7 1307.93 453.77 1318.88 447.85 1329.41 441.92 1339.5 436 1349.16 430.07 1358.37 424.15 1367.11 418.22 1375.39 412.29 1383.2 406.37 1390.52 400.44 1397.34 394.52 1403.67 388.59 1409.5 382.67 1414.81 376.74 1419.61 370.82 1423.88 364.89 1427.64 358.97 1430.86 353.04 1433.55 347.11 1435.71 341.19 1437.32 335.26 1438.4 329.34 1438.94 323.41 1438.94 317.49 1438.4 311.56 1437.32 305.64 1435.71 299.71 1433.55 293.79 1430.86 287.86 1427.64 281.93 1423.88 276.01 1419.61 270.08 1414.81 264.16 1409.5 258.23 1403.67 252.31 1397.34 246.38 1390.52 240.46 1383.2 234.53 1375.39 228.61 1367.11 222.68 1358.37 216.75 1349.16 210.83 1339.5 204.9 1329.41 198.98 1318.88 193.05 1307.93 187.13 1296.58 181.2 1284.83 175.28 1272.69 169.35 1260.18 163.43 1247.31 157.5 1234.09 151.57 1220.54 145.65 1206.67 139.72 1192.49 133.8 1178.02 127.87 1163.27 121.95 1148.26 116.02 1133 110.1 1117.51 104.17 1101.81 98.25 1085.9 92.32 1069.81 86.39 1053.55 80.47 1037.13 74.54 1020.58 68.62 1003.91 62.69 987.14 56.77 970.29 50.84 953.36 44.92 936.39 38.99 919.38 33.07 902.35 27.14"/><path d="M902.35 613.76 920.93 607.83 939.48 601.91 958 595.98 976.46 590.06 994.85 584.13 1013.15 578.21 1031.33 572.28 1049.38 566.36 1067.29 560.43 1085.03 554.51 1102.59 548.58 1119.94 542.65 1137.07 536.73 1153.97 530.8 1170.62 524.88 1186.99 518.95 1203.08 513.03 1218.87 507.1 1234.34 501.18 1249.47 495.25 1264.25 489.33 1278.67 483.4 1292.71 477.47 1306.36 471.55 1319.6 465.62 1332.42 459.7 1344.8 453.77 1356.74 447.85 1368.23 441.92 1379.24 436 1389.78 430.07 1399.82 424.15 1409.36 418.22 1418.4 412.29 1426.91 406.37 1434.89 400.44 1442.34 394.52 1449.25 388.59 1455.6 382.67 1461.4 376.74 1466.63 370.82 1471.3 364.89 1475.39 358.97 1478.91 353.04 1481.84 347.11 1484.19 341.19 1485.96 335.26 1487.14 329.34 1487.73 323.41 1487.73 317.49 1487.14 311.56 1485.96 305.64 1484.19 299.71 1481.84 293.79 1478.91 287.86 1475.39 281.93 1471.3 276.01 1466.63 270.08 1461.4 264.16 1455.6 258.23 1449.25 252.31 1442.34 246.38 1434.89 240.46 1426.91 234.53 1418.4 228.61 1409.36 222.68 1399.82 216.75 1389.78 210.83 1379.24 204.9 1368.23 198.98 1356.74 193.05 1344.8 187.13 1332.42 181.2 1319.6 175.28 1306.36 169.35 1292.71 163.43 1278.67 157.5 1264.25 151.57 1249.47 145.65 1234.34 139.72 1218.87 133.8 1203.08 127.87 1186.99 121.95 1170.62 116.02 1153.97 110.1 1137.07 104.17 1119.94 98.25 1102.59 92.32 1085.03 86.39 1067.29 80.47 1049.38 74.54 1031.33 68.62 1013.15 62.69 994.85 56.77 976.46 50.84 958 44.92 939.48 38.99 920.93 33.07 902.35 27.14"/><path d="M902.35 565H750.82"/><path d="M902.35 565H1053.88"/><path d="M902.35 516H609.62"/><path d="M902.35 516H1195.08"/><path d="M902.35 467H488.37"/><path d="M902.35 467H1316.33"/><path d="M902.35 418H395.34"/><path d="M902.35 418H1409.36"/><path d="M902.35 369H336.85"/><path d="M902.35 369H1467.85"/><path d="M902.35 320H316.9"/><path d="M902.35 320H1487.8"/><path d="M902.35 272H336.85"/><path d="M902.35 272H1467.85"/><path d="M902.35 223H395.34"/><path d="M902.35 223H1409.36"/><path d="M902.35 174H488.37"/><path d="M902.35 174H1316.33"/><path d="M902.35 125H609.62"/><path d="M902.35 125H1195.08"/><path d="M902.35 76H750.82"/><path d="M902.35 76H1053.88"/></g>
<g font-family="Liberation Sans, sans-serif" font-size="10.0" fill="#808080"><text x="301.64" y="329.7" textLength="25.82" lengthAdjust="spacingAndGlyphs">+180</text><text x="399.22" y="329.7" textLength="25.82" lengthAdjust="spacingAndGlyphs">+150</text><text x="496.79" y="329.7" textLength="25.82" lengthAdjust="spacingAndGlyphs">+120</text><text x="597.36" y="329.7" textLength="19.84" lengthAdjust="spacingAndGlyphs">+90</text><text x="694.93" y="329.7" textLength="19.84" lengthAdjust="spacingAndGlyphs">+60</text><text x="792.51" y="329.7" textLength="19.84" lengthAdjust="spacingAndGlyphs">+30</text><text x="893.07" y="329.7" textLength="13.86" lengthAdjust="spacingAndGlyphs">+0</text><text x="984.67" y="329.7" textLength="25.82" lengthAdjust="spacingAndGlyphs">+330</text><text x="1082.24" y="329.7" textLength="25.82" lengthAdjust="spacingAndGlyphs">+300</text><text x="1179.82" y="329.7" textLength="25.82" lengthAdjust="spacingAndGlyphs">+270</text><text x="1277.39" y="329.7" textLength="25.82" lengthAdjust="spacingAndGlyphs">+240</text><text x="1374.97" y="329.7" textLength="25.82" lengthAdjust="spacingAndGlyphs">+210</text><text x="1472.54" y="329.7" textLength="25.82" lengthAdjust="spacingAndGlyphs">+180</text><text x="890.08" y="24.94" textLength="19.84" lengthAdjust="spacingAndGlyphs">+90</text><text x="890.08" y="122.71" textLength="19.84" lengthAdjust="spacingAndGlyphs">+60</text><text x="890.08" y="220.48" textLength="19.84" lengthAdjust="spacingAndGlyphs">+30</text><text x="890.08" y="428.12" textLength="19.84" lengthAdjust="spacingAndGlyphs">−30</text><text x="890.08" y="525.89" textLength="19.84" lengthAdjust="spacingAndGlyphs">−60</text><text x="890.08" y="623.66" textLength="19.84" lengthAdjust="spacingAndGlyphs">−90</text></g>
<g fill="none" stroke="#808080" stroke-width="0.65"><circle cx="332.16" cy="322.6" r="0.95"/><circle cx="429.73" cy="322.6" r="0.95"/><circle cx="527.31" cy="322.6" r="0.95"/><circle cx="621.89" cy="322.6" r="0.95"/><circle cx="719.47" cy="322.6" r="0.95"/><circle cx="817.04" cy="322.6" r="0.95"/><circle cx="911.63" cy="322.6" r="0.95"/><circle cx="1015.18" cy="322.6" r="0.95"/><circle cx="1112.76" cy="322.6" r="0.95"/><circle cx="1210.33" cy="322.6" r="0.95"/><circle cx="1307.91" cy="322.6" r="0.95"/><circle cx="1405.48" cy="322.6" r="0.95"/><circle cx="1503.06" cy="322.6" r="0.95"/><circle cx="914.62" cy="17.84" r="0.95"/><circle cx="914.62" cy="115.61" r="0.95"/><circle cx="914.62" cy="213.38" r="0.95"/><circle cx="914.62" cy="421.02" r="0.95"/><circle cx="914.62" cy="518.79" r="0.95"/><circle cx="914.62" cy="616.56" r="0.95"/></g>
<g fill="none" stroke="#fff" stroke-opacity="0.4" stroke-width="0.7" stroke-dasharray="0.7 1.15"><path d="M707.5 358.8 697.3 347.3 678.7 327.3 660 300.7 646.7 271.3 637.3 239.3 633.3 207.3 632 172.7 628 151.3 617.3 144.7 593.3 142 566.7 144.7 545.3 150"/><path d="M902.2 237.3 945.3 237.5 980.3 242.2 1041 256.2 1113.3 280.7 1183.3 307.5 1230 329.7 1282.5 356.5"/><path d="M980.8 353.3 983.8 320.3 983.8 290 978.7 240 968.9 174 954.2 122.7 939.6 90.9 927.3 59 915 36 903 27.5"/></g>
<g fill="none" stroke="#a0a0a0" stroke-width="1.0"><path d="M696 348 707.5 359.5"/><path d="M888.2 238 902.2 237.3"/><path d="M973.3 395.5 980.8 353.3"/></g>
<g font-family="Liberation Mono, monospace" font-size="14.5" fill="#fff" xml:space="preserve"><text x="315.5" y="30" textLength="50.28" lengthAdjust="spacingAndGlyphs">USL016</text><text x="315.5" y="43" textLength="318.44" lengthAdjust="spacingAndGlyphs">Beg: 20251022 02:40:35 (sol = 208.60°)</text><text x="315.5" y="56" textLength="318.44" lengthAdjust="spacingAndGlyphs">End: 20251022 07:54:52 (sol = 208.82°)</text><text x="315.5" y="69" textLength="318.44" lengthAdjust="spacingAndGlyphs">--------------------------------------</text><text x="315.5" y="82" textLength="50.28" lengthAdjust="spacingAndGlyphs">...: 3</text></g>
<g font-family="Liberation Sans, sans-serif" font-size="29.5" fill="#5a5a5a"><text transform="translate(148.6 696.82) rotate(-90)" textLength="53.12" lengthAdjust="spacingAndGlyphs">APR</text><text transform="translate(295.3 699.45) rotate(-90)" textLength="55.75" lengthAdjust="spacingAndGlyphs">MAY</text><text transform="translate(435.3 691.27) rotate(-90)" textLength="47.57" lengthAdjust="spacingAndGlyphs">JUN</text><text transform="translate(575.8 686.15) rotate(-90)" textLength="42.45" lengthAdjust="spacingAndGlyphs">JUL</text><text transform="translate(723 702.42) rotate(-90)" textLength="58.72" lengthAdjust="spacingAndGlyphs">AUG</text><text transform="translate(871.7 693.81) rotate(-90)" textLength="50.11" lengthAdjust="spacingAndGlyphs">SEP</text><text transform="translate(1016.1 699.88) rotate(-90)" textLength="56.18" lengthAdjust="spacingAndGlyphs">OCT</text><text transform="translate(1170.5 702.7) rotate(-90)" textLength="59" lengthAdjust="spacingAndGlyphs">NOV</text><text transform="translate(1320.6 699.98) rotate(-90)" textLength="56.28" lengthAdjust="spacingAndGlyphs">DEC</text><text transform="translate(1469.2 689.51) rotate(-90)" textLength="45.81" lengthAdjust="spacingAndGlyphs">JAN</text><text transform="translate(1628.7 694.43) rotate(-90)" textLength="50.73" lengthAdjust="spacingAndGlyphs">FEB</text><text transform="translate(1766.7 703.78) rotate(-90)" textLength="60.08" lengthAdjust="spacingAndGlyphs">MAR</text></g>
<line x1="1044" y1="842.5" x2="1044" y2="641.5" stroke="#f00" stroke-width="2.08" stroke-dasharray="5.14 2.22"/>
<g><rect x="106" y="831.92" width="23.8" height="4.17" fill="#c2df23"/><rect x="165.1" y="831.92" width="179.9" height="4.17" fill="#c2df23"/><rect x="366" y="831.92" width="259" height="4.17" fill="#c2df23"/><rect x="636" y="831.92" width="151" height="4.17" fill="#c2df23"/><rect x="807" y="831.92" width="93" height="4.17" fill="#c2df23"/><rect x="920" y="831.92" width="53" height="4.17" fill="#c2df23"/><rect x="984" y="831.92" width="82" height="4.17" fill="#c2df23"/><rect x="1082" y="831.92" width="122" height="4.17" fill="#c2df23"/><rect x="1244" y="831.92" width="82" height="4.17" fill="#c2df23"/><rect x="1337" y="831.92" width="19" height="4.17" fill="#c2df23"/><rect x="1381" y="831.92" width="63" height="4.17" fill="#c2df23"/><rect x="1459" y="831.92" width="53" height="4.17" fill="#c2df23"/><rect x="1523" y="831.92" width="24" height="4.17" fill="#c2df23"/><rect x="1724" y="831.92" width="24" height="4.17" fill="#c2df23"/><rect x="1758" y="831.92" width="24" height="4.17" fill="#c2df23"/><rect x="165.1" y="815.92" width="23.8" height="4.17" fill="#86d549"/><rect x="224.2" y="815.92" width="62.5" height="4.17" fill="#86d549"/><rect x="312" y="815.92" width="29" height="4.17" fill="#86d549"/><rect x="366" y="815.92" width="127" height="4.17" fill="#86d549"/><rect x="508" y="815.92" width="146" height="4.17" fill="#86d549"/><rect x="704" y="815.92" width="34" height="4.17" fill="#86d549"/><rect x="773" y="815.92" width="73" height="4.17" fill="#86d549"/><rect x="871" y="815.92" width="117" height="4.17" fill="#86d549"/><rect x="1003" y="815.92" width="14" height="4.17" fill="#86d549"/><rect x="1062" y="815.92" width="151" height="4.17" fill="#86d549"/><rect x="1244" y="815.92" width="23" height="4.17" fill="#86d549"/><rect x="1293" y="815.92" width="23" height="4.17" fill="#86d549"/><rect x="1342" y="815.92" width="23" height="4.17" fill="#86d549"/><rect x="1386" y="815.92" width="43" height="4.17" fill="#86d549"/><rect x="1459" y="815.92" width="24" height="4.17" fill="#86d549"/><rect x="1548" y="815.92" width="23" height="4.17" fill="#86d549"/><rect x="165.1" y="798.92" width="23.8" height="4.17" fill="#52c569"/><rect x="258" y="798.92" width="230" height="4.17" fill="#52c569"/><rect x="508" y="798.92" width="107" height="4.17" fill="#52c569"/><rect x="626" y="798.92" width="92" height="4.17" fill="#52c569"/><rect x="729" y="798.92" width="97" height="4.17" fill="#52c569"/><rect x="949" y="798.92" width="201" height="4.17" fill="#52c569"/><rect x="1160" y="798.92" width="88" height="4.17" fill="#52c569"/><rect x="1258" y="798.92" width="186" height="4.17" fill="#52c569"/><rect x="1459" y="798.92" width="24" height="4.17" fill="#52c569"/><rect x="1553" y="798.92" width="23" height="4.17" fill="#52c569"/><rect x="194.2" y="782.92" width="23.8" height="4.17" fill="#2ab07f"/><rect x="322" y="782.92" width="185" height="4.17" fill="#2ab07f"/><rect x="518" y="782.92" width="24" height="4.17" fill="#2ab07f"/><rect x="557" y="782.92" width="127" height="4.17" fill="#2ab07f"/><rect x="807" y="782.92" width="24" height="4.17" fill="#2ab07f"/><rect x="954" y="782.92" width="19" height="4.17" fill="#2ab07f"/><rect x="989" y="782.92" width="136" height="4.17" fill="#2ab07f"/><rect x="1155" y="782.92" width="63" height="4.17" fill="#2ab07f"/><rect x="1244" y="782.92" width="23" height="4.17" fill="#2ab07f"/><rect x="1317" y="782.92" width="24" height="4.17" fill="#2ab07f"/><rect x="1396" y="782.92" width="23" height="4.17" fill="#2ab07f"/><rect x="1464" y="782.92" width="186" height="4.17" fill="#2ab07f"/><rect x="341" y="766.92" width="29" height="4.17" fill="#1e9b8a"/><rect x="410" y="766.92" width="38" height="4.17" fill="#1e9b8a"/><rect x="469" y="766.92" width="24" height="4.17" fill="#1e9b8a"/><rect x="528" y="766.92" width="18" height="4.17" fill="#1e9b8a"/><rect x="562" y="766.92" width="29" height="4.17" fill="#1e9b8a"/><rect x="616" y="766.92" width="33" height="4.17" fill="#1e9b8a"/><rect x="959" y="766.92" width="29" height="4.17" fill="#1e9b8a"/><rect x="1062" y="766.92" width="24" height="4.17" fill="#1e9b8a"/><rect x="1101" y="766.92" width="24" height="4.17" fill="#1e9b8a"/><rect x="1160" y="766.92" width="34" height="4.17" fill="#1e9b8a"/><rect x="1249" y="766.92" width="23" height="4.17" fill="#1e9b8a"/><rect x="1425" y="766.92" width="87" height="4.17" fill="#1e9b8a"/><rect x="420" y="749.92" width="24" height="4.17" fill="#25858e"/><rect x="533" y="749.92" width="23" height="4.17" fill="#25858e"/><rect x="567" y="749.92" width="24" height="4.17" fill="#25858e"/><rect x="621" y="749.92" width="122" height="4.17" fill="#25858e"/><rect x="969" y="749.92" width="166" height="4.17" fill="#25858e"/><rect x="1185" y="749.92" width="161" height="4.17" fill="#25858e"/><rect x="1469" y="749.92" width="24" height="4.17" fill="#25858e"/><rect x="430" y="733.92" width="23" height="4.17" fill="#2d708e"/><rect x="577" y="733.92" width="156" height="4.17" fill="#2d708e"/><rect x="994" y="733.92" width="111" height="4.17" fill="#2d708e"/><rect x="1116" y="733.92" width="107" height="4.17" fill="#2d708e"/><rect x="1263" y="733.92" width="29" height="4.17" fill="#2d708e"/><rect x="1489" y="733.92" width="23" height="4.17" fill="#2d708e"/><rect x="592" y="717.92" width="23" height="4.17" fill="#38588c"/><rect x="655" y="717.92" width="117" height="4.17" fill="#38588c"/><rect x="1072" y="717.92" width="171" height="4.17" fill="#38588c"/><rect x="1263" y="717.92" width="24" height="4.17" fill="#38588c"/><rect x="596" y="700.92" width="137" height="4.17" fill="#433e85"/><rect x="1092" y="700.92" width="28" height="4.17" fill="#433e85"/><rect x="1200" y="700.92" width="23" height="4.17" fill="#433e85"/><rect x="1273" y="700.92" width="53" height="4.17" fill="#433e85"/><rect x="1111" y="684.92" width="24" height="4.17" fill="#482173"/></g>
<g stroke="#fff" stroke-opacity="0.3" stroke-width="2.08" stroke-dasharray="2.083 3.438"><line x1="75" y1="842.5" x2="75" y2="641.5"/><line x1="219" y1="842.5" x2="219" y2="641.5"/><line x1="365" y1="842.5" x2="365" y2="641.5"/><line x1="506" y1="842.5" x2="506" y2="641.5"/><line x1="651" y1="842.5" x2="651" y2="641.5"/><line x1="797" y1="842.5" x2="797" y2="641.5"/><line x1="940" y1="842.5" x2="940" y2="641.5"/><line x1="1091" y1="842.5" x2="1091" y2="641.5"/><line x1="1239" y1="842.5" x2="1239" y2="641.5"/><line x1="1394" y1="842.5" x2="1394" y2="641.5"/><line x1="1548" y1="842.5" x2="1548" y2="641.5"/><line x1="1687" y1="842.5" x2="1687" y2="641.5"/></g>
<path d="M113.65 834h8.3M117.8 829.85v8.3M240.45 834h8.3M244.6 829.85v8.3M510.45 834h8.3M514.6 829.85v8.3M706.85 834h8.3M711 829.85v8.3M833.45 834h8.3M837.6 829.85v8.3M961.85 834h8.3M966 829.85v8.3M986.45 834h8.3M990.6 829.85v8.3M1116.45 834h8.3M1120.6 829.85v8.3M1295.45 834h8.3M1299.6 829.85v8.3M1341.45 834h8.3M1345.6 829.85v8.3M1412.45 834h8.3M1416.6 829.85v8.3M1481.45 834h8.3M1485.6 829.85v8.3M1530.45 834h8.3M1534.6 829.85v8.3M1731.45 834h8.3M1735.6 829.85v8.3M1765.45 834h8.3M1769.6 829.85v8.3M172.75 818h8.3M176.9 813.85v8.3M255.55 818h8.3M259.7 813.85v8.3M323.85 818h8.3M328 813.85v8.3M437.85 818h8.3M442 813.85v8.3M598.85 818h8.3M603 813.85v8.3M716.45 818h8.3M720.6 813.85v8.3M793.45 818h8.3M797.6 813.85v8.3M939.45 818h8.3M943.6 813.85v8.3M1005.45 818h8.3M1009.6 813.85v8.3M1152.45 818h8.3M1156.6 813.85v8.3M1250.45 818h8.3M1254.6 813.85v8.3M1299.45 818h8.3M1303.6 813.85v8.3M1349.45 818h8.3M1353.6 813.85v8.3M1402.45 818h8.3M1406.6 813.85v8.3M1466.85 818h8.3M1471 813.85v8.3M1554.45 818h8.3M1558.6 813.85v8.3M174.85 801h8.3M179 796.85v8.3M378.85 801h8.3M383 796.85v8.3M544.45 801h8.3M548.6 796.85v8.3M682.85 801h8.3M687 796.85v8.3M741.45 801h8.3M745.6 796.85v8.3M1074.45 801h8.3M1078.6 796.85v8.3M1216.45 801h8.3M1220.6 796.85v8.3M1304.45 801h8.3M1308.6 796.85v8.3M1466.45 801h8.3M1470.6 796.85v8.3M1559.45 801h8.3M1563.6 796.85v8.3M201.65 785h8.3M205.8 780.85v8.3M400.85 785h8.3M405 780.85v8.3M525.85 785h8.3M530 780.85v8.3M638.45 785h8.3M642.6 780.85v8.3M814.85 785h8.3M819 780.85v8.3M959.45 785h8.3M963.6 780.85v8.3M1040.25 785h8.3M1044.4 780.85v8.3M1187.45 785h8.3M1191.6 780.85v8.3M1250.45 785h8.3M1254.6 780.85v8.3M1324.45 785h8.3M1328.6 780.85v8.3M1402.45 785h8.3M1406.6 780.85v8.3M1545.45 785h8.3M1549.6 780.85v8.3M355.85 769h8.3M360 764.85v8.3M426.45 769h8.3M430.6 764.85v8.3M476.45 769h8.3M480.6 764.85v8.3M535.85 769h8.3M540 764.85v8.3M570.45 769h8.3M574.6 764.85v8.3M630.85 769h8.3M635 764.85v8.3M973.45 769h8.3M977.6 764.85v8.3M1069.45 769h8.3M1073.6 764.85v8.3M1108.45 769h8.3M1112.6 764.85v8.3M1177.45 769h8.3M1181.6 764.85v8.3M1255.45 769h8.3M1259.6 764.85v8.3M1466.45 769h8.3M1470.6 764.85v8.3M427.45 752h8.3M431.6 747.85v8.3M539.85 752h8.3M544 747.85v8.3M574.45 752h8.3M578.6 747.85v8.3M703.85 752h8.3M708 747.85v8.3M1094.45 752h8.3M1098.6 747.85v8.3M1270.45 752h8.3M1274.6 747.85v8.3M1476.45 752h8.3M1480.6 747.85v8.3M437.45 736h8.3M441.6 731.85v8.3M630.85 736h8.3M635 731.85v8.3M1038.45 736h8.3M1042.6 731.85v8.3M1167.45 736h8.3M1171.6 731.85v8.3M1274.45 736h8.3M1278.6 731.85v8.3M1496.45 736h8.3M1500.6 731.85v8.3M598.45 720h8.3M602.6 715.85v8.3M726.85 720h8.3M731 715.85v8.3M1187.45 720h8.3M1191.6 715.85v8.3M1270.45 720h8.3M1274.6 715.85v8.3M687.85 703h8.3M692 698.85v8.3M1101.25 703h8.3M1105.4 698.85v8.3M1206.45 703h8.3M1210.6 698.85v8.3M1299.45 703h8.3M1303.6 698.85v8.3M1118.25 687h8.3M1122.4 682.85v8.3" stroke="#fff" stroke-width="2.08" fill="none"/>
<g font-family="Liberation Sans, sans-serif" font-size="10.6" fill="#fff"><text x="106.81" y="831.6" textLength="20.38" lengthAdjust="spacingAndGlyphs">KSE</text><text x="244.8" y="831.6" textLength="19.6" lengthAdjust="spacingAndGlyphs">ETA</text><text x="484" y="831.6" textLength="22.59" lengthAdjust="spacingAndGlyphs">NZC</text><text x="699.02" y="831.6" textLength="23.16" lengthAdjust="spacingAndGlyphs">NDA</text><text x="843.89" y="831.6" textLength="19.82" lengthAdjust="spacingAndGlyphs">SPE</text><text x="935.21" y="831.6" textLength="22.78" lengthAdjust="spacingAndGlyphs">ARD</text><text x="1014.1" y="831.6" textLength="21.61" lengthAdjust="spacingAndGlyphs">EGE</text><text x="1131.88" y="831.6" textLength="20.83" lengthAdjust="spacingAndGlyphs">NTA</text><text x="1272.39" y="831.6" textLength="25.42" lengthAdjust="spacingAndGlyphs">MON</text><text x="1332.67" y="831.6" textLength="21.85" lengthAdjust="spacingAndGlyphs">URS</text><text x="1400.95" y="831.6" textLength="21.7" lengthAdjust="spacingAndGlyphs">AHY</text><text x="1473.04" y="831.6" textLength="25.12" lengthAdjust="spacingAndGlyphs">GUM</text><text x="1523.91" y="831.6" textLength="22.79" lengthAdjust="spacingAndGlyphs">OHY</text><text x="1724.54" y="831.6" textLength="21.93" lengthAdjust="spacingAndGlyphs">XHE</text><text x="1760.96" y="831.6" textLength="17.07" lengthAdjust="spacingAndGlyphs">EVI</text><text x="165.65" y="815.6" textLength="21.1" lengthAdjust="spacingAndGlyphs">AVB</text><text x="245.86" y="815.6" textLength="17.67" lengthAdjust="spacingAndGlyphs">ELY</text><text x="311.85" y="815.6" textLength="23.8" lengthAdjust="spacingAndGlyphs">CAM</text><text x="420.76" y="815.6" textLength="21.67" lengthAdjust="spacingAndGlyphs">SSG</text><text x="568.08" y="815.6" textLength="21.04" lengthAdjust="spacingAndGlyphs">PCA</text><text x="709.01" y="815.6" textLength="23.17" lengthAdjust="spacingAndGlyphs">AUD</text><text x="798.21" y="815.6" textLength="22.37" lengthAdjust="spacingAndGlyphs">AUR</text><text x="919.92" y="815.6" textLength="22.15" lengthAdjust="spacingAndGlyphs">DSX</text><text x="999.35" y="815.6" textLength="23.5" lengthAdjust="spacingAndGlyphs">OCU</text><text x="1126.9" y="815.6" textLength="22.41" lengthAdjust="spacingAndGlyphs">OER</text><text x="1243.16" y="815.6" textLength="23.28" lengthAdjust="spacingAndGlyphs">DKD</text><text x="1293.13" y="815.6" textLength="22.14" lengthAdjust="spacingAndGlyphs">DSV</text><text x="1343.89" y="815.6" textLength="18.22" lengthAdjust="spacingAndGlyphs">ALY</text><text x="1399.94" y="815.6" textLength="15.73" lengthAdjust="spacingAndGlyphs">ILE</text><text x="1461.13" y="815.6" textLength="21.53" lengthAdjust="spacingAndGlyphs">SCC</text><text x="1548.98" y="815.6" textLength="20.05" lengthAdjust="spacingAndGlyphs">FEV</text><text x="166.83" y="798.6" textLength="18.34" lengthAdjust="spacingAndGlyphs">LYR</text><text x="362.86" y="798.6" textLength="19.67" lengthAdjust="spacingAndGlyphs">JMC</text><text x="550.49" y="798.6" textLength="16.22" lengthAdjust="spacingAndGlyphs">JPE</text><text x="660.94" y="798.6" textLength="20.72" lengthAdjust="spacingAndGlyphs">PAU</text><text x="765.1" y="798.6" textLength="18.31" lengthAdjust="spacingAndGlyphs">NIA</text><text x="1040.14" y="798.6" textLength="19.63" lengthAdjust="spacingAndGlyphs">STA</text><text x="1194.09" y="798.6" textLength="24.62" lengthAdjust="spacingAndGlyphs">NOO</text><text x="1340.75" y="798.6" textLength="24.89" lengthAdjust="spacingAndGlyphs">COM</text><text x="1459.13" y="798.6" textLength="22.73" lengthAdjust="spacingAndGlyphs">NCC</text><text x="1554.12" y="798.6" textLength="20.96" lengthAdjust="spacingAndGlyphs">FED</text><text x="196.83" y="782.6" textLength="18.35" lengthAdjust="spacingAndGlyphs">HVI</text><text x="403.03" y="782.6" textLength="17.74" lengthAdjust="spacingAndGlyphs">ARI</text><text x="519" y="782.6" textLength="21.39" lengthAdjust="spacingAndGlyphs">SZC</text><text x="608.08" y="782.6" textLength="21.04" lengthAdjust="spacingAndGlyphs">CAP</text><text x="807.06" y="782.6" textLength="22.39" lengthAdjust="spacingAndGlyphs">NUE</text><text x="950.14" y="782.6" textLength="22.22" lengthAdjust="spacingAndGlyphs">OCT</text><text x="1049.88" y="782.6" textLength="18.83" lengthAdjust="spacingAndGlyphs">ORI</text><text x="1173.93" y="782.6" textLength="24.74" lengthAdjust="spacingAndGlyphs">AMO</text><text x="1244.32" y="782.6" textLength="21.96" lengthAdjust="spacingAndGlyphs">DPC</text><text x="1320.08" y="782.6" textLength="17.64" lengthAdjust="spacingAndGlyphs">XVI</text><text x="1396.02" y="782.6" textLength="23.35" lengthAdjust="spacingAndGlyphs">QUA</text><text x="1548.34" y="782.6" textLength="22.73" lengthAdjust="spacingAndGlyphs">AAN</text><text x="342.46" y="766.6" textLength="20.87" lengthAdjust="spacingAndGlyphs">TAH</text><text x="422.66" y="766.6" textLength="17.07" lengthAdjust="spacingAndGlyphs">JEA</text><text x="474.78" y="766.6" textLength="12.64" lengthAdjust="spacingAndGlyphs">JIP</text><text x="528.94" y="766.6" textLength="19.51" lengthAdjust="spacingAndGlyphs">PPS</text><text x="567.9" y="766.6" textLength="21.39" lengthAdjust="spacingAndGlyphs">ZCS</text><text x="620.93" y="766.6" textLength="23.74" lengthAdjust="spacingAndGlyphs">GDR</text><text x="960.03" y="766.6" textLength="22.35" lengthAdjust="spacingAndGlyphs">DRA</text><text x="1062.01" y="766.6" textLength="22.28" lengthAdjust="spacingAndGlyphs">LUM</text><text x="1101.99" y="766.6" textLength="21.52" lengthAdjust="spacingAndGlyphs">RPU</text><text x="1166.65" y="766.6" textLength="21.7" lengthAdjust="spacingAndGlyphs">THA</text><text x="1248.96" y="766.6" textLength="20.88" lengthAdjust="spacingAndGlyphs">PSU</text><text x="1459.92" y="766.6" textLength="21.16" lengthAdjust="spacingAndGlyphs">XCB</text><text x="422.92" y="749.6" textLength="17.36" lengthAdjust="spacingAndGlyphs">JRC</text><text x="533.11" y="749.6" textLength="22.58" lengthAdjust="spacingAndGlyphs">CAN</text><text x="567.95" y="749.6" textLength="20.3" lengthAdjust="spacingAndGlyphs">FAN</text><text x="670.97" y="749.6" textLength="20.45" lengthAdjust="spacingAndGlyphs">PER</text><text x="1039.9" y="749.6" textLength="20.3" lengthAdjust="spacingAndGlyphs">CTA</text><text x="1254.2" y="749.6" textLength="22.61" lengthAdjust="spacingAndGlyphs">HYD</text><text x="1469.12" y="749.6" textLength="24.17" lengthAdjust="spacingAndGlyphs">XUM</text><text x="429.95" y="733.6" textLength="23.11" lengthAdjust="spacingAndGlyphs">COR</text><text x="647.02" y="733.6" textLength="21.96" lengthAdjust="spacingAndGlyphs">SDA</text><text x="1039.91" y="733.6" textLength="18.18" lengthAdjust="spacingAndGlyphs">LMI</text><text x="1155.83" y="733.6" textLength="20.95" lengthAdjust="spacingAndGlyphs">LEO</text><text x="1264.13" y="733.6" textLength="21.14" lengthAdjust="spacingAndGlyphs">EHY</text><text x="1490.07" y="733.6" textLength="21.35" lengthAdjust="spacingAndGlyphs">ECV</text><text x="594.98" y="717.6" textLength="17.64" lengthAdjust="spacingAndGlyphs">JXA</text><text x="704.91" y="717.6" textLength="21.99" lengthAdjust="spacingAndGlyphs">KCG</text><text x="1145.08" y="717.6" textLength="23.34" lengthAdjust="spacingAndGlyphs">AND</text><text x="1263.11" y="717.6" textLength="23.39" lengthAdjust="spacingAndGlyphs">DAD</text><text x="657.91" y="700.6" textLength="17.19" lengthAdjust="spacingAndGlyphs">ERI</text><text x="1098" y="700.6" textLength="20.8" lengthAdjust="spacingAndGlyphs">SLD</text><text x="1199.98" y="700.6" textLength="22.44" lengthAdjust="spacingAndGlyphs">ORS</text><text x="1287.87" y="700.6" textLength="24.06" lengthAdjust="spacingAndGlyphs">GEM</text><text x="1111.31" y="684.6" textLength="23.57" lengthAdjust="spacingAndGlyphs">KUM</text></g>
<rect x="20.5" y="641.5" width="1765" height="201" fill="none" stroke="#fff" stroke-width="1.11"/>
<path d="M20.4 842.5v4.86M265.5 842.5v4.86M510.59 842.5v4.86M755.69 842.5v4.86M1000.79 842.5v4.86M1245.89 842.5v4.86M1490.98 842.5v4.86M1736.08 842.5v4.86" stroke="#fff" stroke-width="1.11"/>
<g font-family="Liberation Sans, sans-serif" font-size="13.89" fill="#fff"><text x="15.98" y="861.9" textLength="8.84" lengthAdjust="spacingAndGlyphs">0</text><text x="256.66" y="861.9" textLength="17.67" lengthAdjust="spacingAndGlyphs">50</text><text x="497.34" y="861.9" textLength="26.51" lengthAdjust="spacingAndGlyphs">100</text><text x="742.44" y="861.9" textLength="26.51" lengthAdjust="spacingAndGlyphs">150</text><text x="987.53" y="861.9" textLength="26.51" lengthAdjust="spacingAndGlyphs">200</text><text x="1232.63" y="861.9" textLength="26.51" lengthAdjust="spacingAndGlyphs">250</text><text x="1477.73" y="861.9" textLength="26.51" lengthAdjust="spacingAndGlyphs">300</text><text x="1722.82" y="861.9" textLength="26.51" lengthAdjust="spacingAndGlyphs">350</text><text x="829.4" y="881.8" textLength="146.69" lengthAdjust="spacingAndGlyphs">Solar longitude (deg)</text></g>
</svg></body></html>
